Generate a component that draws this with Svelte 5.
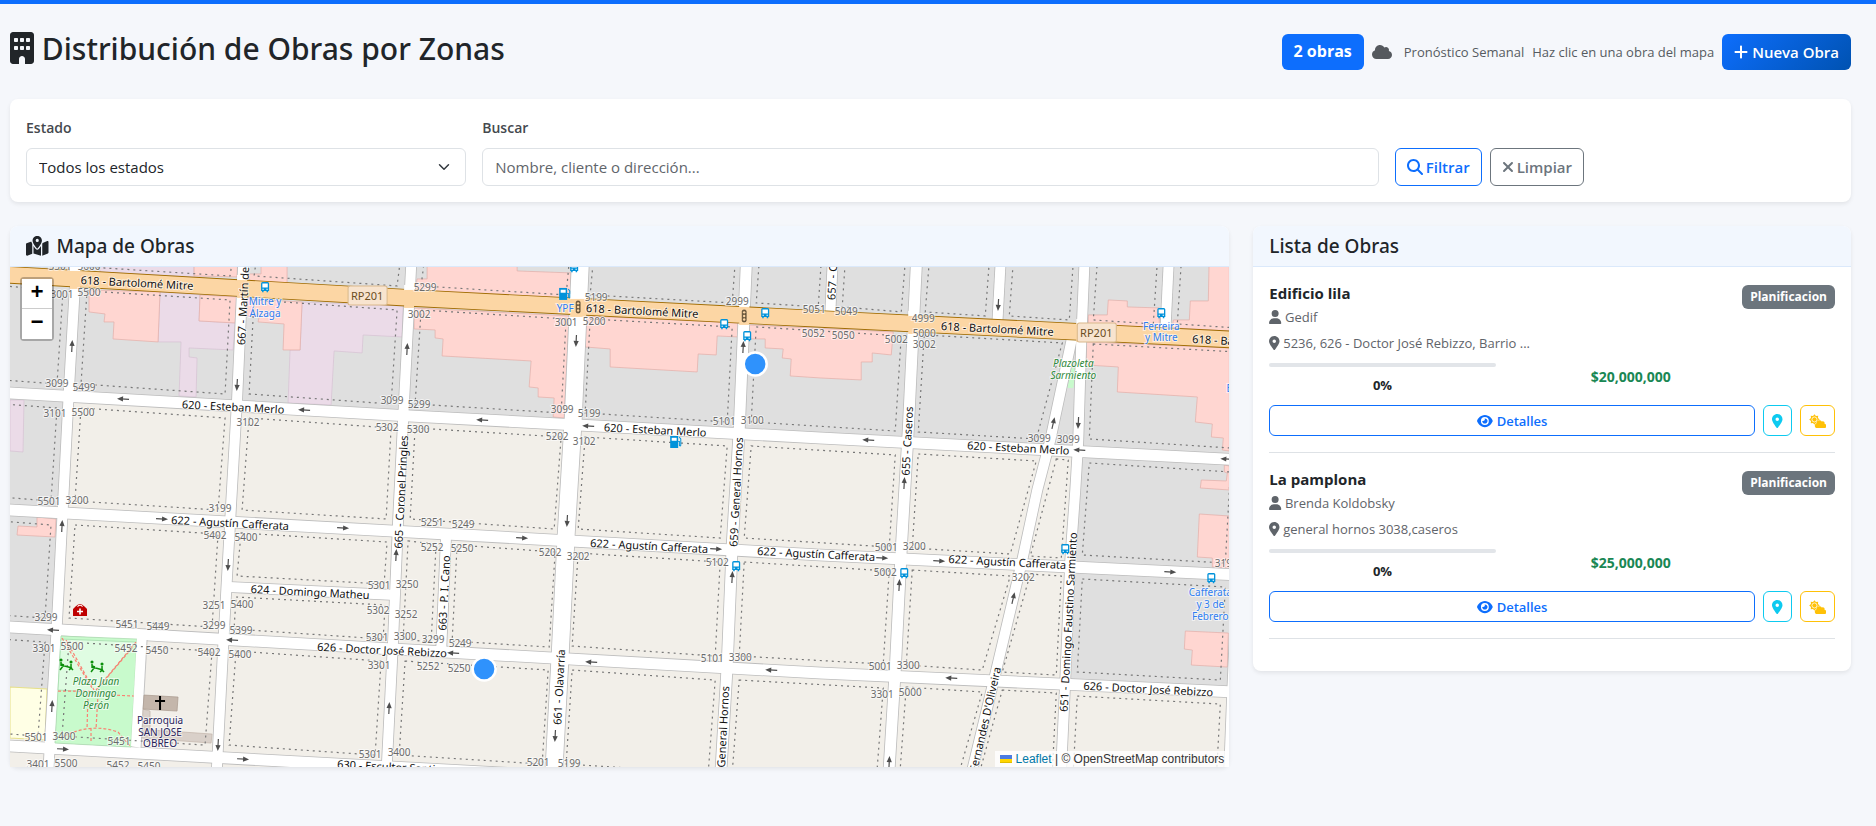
<script>
  const ICONS = {
    building: [384, 'M48 0C21.5 0 0 21.5 0 48V464c0 26.5 21.5 48 48 48h96V432c0-26.5 21.5-48 48-48s48 21.5 48 48v80h96c26.5 0 48-21.5 48-48V48c0-26.5-21.5-48-48-48H48zM64 240c0-8.8 7.2-16 16-16h32c8.8 0 16 7.2 16 16v32c0 8.8-7.2 16-16 16H80c-8.8 0-16-7.2-16-16V240zm112-16h32c8.8 0 16 7.2 16 16v32c0 8.8-7.2 16-16 16H176c-8.8 0-16-7.2-16-16V240c0-8.8 7.2-16 16-16zm80 16c0-8.8 7.2-16 16-16h32c8.8 0 16 7.2 16 16v32c0 8.8-7.2 16-16 16H272c-8.8 0-16-7.2-16-16V240zM80 96h32c8.8 0 16 7.2 16 16v32c0 8.8-7.2 16-16 16H80c-8.8 0-16-7.2-16-16V112c0-8.8 7.2-16 16-16zm80 16c0-8.8 7.2-16 16-16h32c8.8 0 16 7.2 16 16v32c0 8.8-7.2 16-16 16H176c-8.8 0-16-7.2-16-16V112zM272 96h32c8.8 0 16 7.2 16 16v32c0 8.8-7.2 16-16 16H272c-8.8 0-16-7.2-16-16V112c0-8.8 7.2-16 16-16z'],
    cloud: [640, 'M0 336c0 79.5 64.5 144 144 144H512c70.7 0 128-57.3 128-128c0-61.9-44-113.6-102.4-125.4c4.1-10.7 6.4-22.4 6.4-34.6c0-53-43-96-96-96c-19.7 0-38.1 6-53.3 16.2C367 64.2 315.3 32 256 32C167.6 32 96 103.6 96 192c0 2.7 .1 5.4 .2 8.1C40.2 219.8 0 273.2 0 336z'],
    plus: [448, 'M256 80c0-17.7-14.3-32-32-32s-32 14.3-32 32V224H48c-17.7 0-32 14.3-32 32s14.3 32 32 32H192V432c0 17.7 14.3 32 32 32s32-14.3 32-32V288H400c17.7 0 32-14.3 32-32s-14.3-32-32-32H256V80z'],
    search: [512, 'M416 208c0 45.9-14.9 88.3-40 122.7L502.6 457.4c12.5 12.5 12.5 32.8 0 45.3s-32.8 12.5-45.3 0L330.7 376c-34.4 25.2-76.8 40-122.7 40C93.1 416 0 322.9 0 208S93.1 0 208 0S416 93.1 416 208zM208 352a144 144 0 1 0 0-288 144 144 0 1 0 0 288z'],
    times: [384, 'M342.6 150.6c12.5-12.5 12.5-32.8 0-45.3s-32.8-12.5-45.3 0L192 210.7 86.6 105.4c-12.5-12.5-32.8-12.5-45.3 0s-12.5 32.8 0 45.3L146.7 256 41.4 361.4c-12.5 12.5-12.5 32.8 0 45.3s32.8 12.5 45.3 0L192 301.3 297.4 406.6c12.5 12.5 32.8 12.5 45.3 0s12.5-32.8 0-45.3L237.3 256 342.6 150.6z'],
    user: [448, 'M224 256A128 128 0 1 0 224 0a128 128 0 1 0 0 256zm-45.7 48C79.8 304 0 383.8 0 482.3C0 498.7 13.3 512 29.7 512H418.3c16.4 0 29.7-13.3 29.7-29.7C448 383.8 368.2 304 269.7 304H178.3z'],
    pin: [384, 'M215.7 499.2C267 435 384 279.4 384 192C384 86 298 0 192 0S0 86 0 192c0 87.4 117 243 168.3 307.2c12.3 15.3 35.1 15.3 47.4 0zM192 128a64 64 0 1 1 0 128 64 64 0 1 1 0-128z'],
    eye: [576, 'M288 32c-80.8 0-145.5 36.8-192.6 80.6C48.6 156 17.3 208 2.5 243.7c-3.3 7.9-3.3 16.7 0 24.6C17.3 304 48.6 356 95.4 399.4C142.5 443.2 207.2 480 288 480s145.5-36.8 192.6-80.6c46.8-43.5 78.1-95.4 93-131.1c3.3-7.9 3.3-16.7 0-24.6c-14.9-35.7-46.2-87.7-93-131.1C433.5 68.8 368.8 32 288 32zM144 256a144 144 0 1 1 288 0 144 144 0 1 1 -288 0zm144-64c0 35.3-28.7 64-64 64c-7.1 0-13.9-1.2-20.3-3.3c-5.5-1.8-11.9 1.6-11.7 7.4c.3 6.9 1.3 13.8 3.2 20.7c13.7 51.2 66.4 81.6 117.6 67.9s81.6-66.4 67.9-117.6c-11.1-41.5-47.8-69.4-88.6-71.1c-5.8-.2-9.2 6.1-7.4 11.7c2.1 6.4 3.3 13.2 3.3 20.3z'],
    map: [576, 'M408 120c0 54.6-73.1 151.9-105.2 192c-7.7 9.6-22 9.6-29.6 0C241.1 271.9 168 174.6 168 120C168 53.7 221.7 0 288 0s120 53.7 120 120zm8 80.4c3.5-6.9 6.7-13.8 9.6-20.6c.5-1.2 1-2.5 1.5-3.7l116-46.4C558.9 123.4 576 135 576 152V422.8c0 9.8-6 18.6-15.1 22.3L416 503V200.4zM137.6 138.3c2.4 14.1 7.2 28.3 12.8 41.5c2.9 6.8 6.1 13.7 9.6 20.6V451.8L32.9 502.7C17.1 509 0 497.4 0 480.4V209.6c0-9.8 6-18.6 15.1-22.3l122.6-49zM327.8 332c13.9-17.4 35.7-45.7 56.2-77V504.3L192 449.4V255c20.5 31.3 42.3 59.6 56.2 77c20.5 25.6 59.1 25.6 79.6 0zM288 152a40 40 0 1 0 0-80 40 40 0 1 0 0 80z']
  };

  let estado = $state('');
  let buscar = $state('');

  const obras = [
    { nombre: 'Edificio lila', cliente: 'Gedif', direccion: '5236, 626 - Doctor José Rebizzo, Barrio ...', estado: 'Planificacion', avance: 0, monto: '$20,000,000' },
    { nombre: 'La pamplona', cliente: 'Brenda Koldobsky', direccion: 'general hornos 3038,caseros', estado: 'Planificacion', avance: 0, monto: '$25,000,000' }
  ];

  // Street centre lines, in map units
  const mitre = [[-40, 272], [10, 275], [410, 298], [820, 319], [1280, 342]];
  const H = [
    [[-40, 250], [1280, 250]],
    mitre,
    [[-40, 390], [10, 393], [410, 416], [820, 438], [1280, 462]],
    [[-40, 507], [10, 510], [410, 532], [820, 555], [1280, 577]],
    [[-40, 625], [10, 627], [410, 650], [820, 673], [1280, 694]],
    [[-40, 743], [10, 746], [410, 768], [820, 790], [1280, 812]]
  ];
  const V = [
    [[-20, 250], [-30, 812]],
    [[77, 250], [76, 267], [69, 388], [63, 504], [57, 622], [50, 740], [46, 820]],
    [[244, 250], [243, 267], [237, 400], [231, 505], [224, 630], [217, 765], [214, 820]],
    [[412, 250], [411, 267], [404, 400], [398, 520], [393, 640], [387, 760], [384, 820]],
    [[581, 250], [580, 267], [573, 420], [566, 535], [560, 655], [554, 767], [551, 820]],
    [[747, 250], [746, 267], [739, 430], [732, 545], [727, 665], [721, 767], [718, 820]],
    [[917, 250], [916, 267], [908, 430], [901, 550], [895, 670], [889, 767], [886, 820]],
    [[1085, 250], [1084, 267], [1081, 340], [1078, 440], [1075, 490], [1070, 560], [1065, 680], [1061, 767], [1059, 820]],
    [[1252, 250], [1232, 690], [1229, 767], [1227, 820]]
  ];
  const oliveira = [[1073, 332], [1050, 440], [1037, 490], [1022, 560], [996, 670], [972, 770]];
  const minor = [
    [[229, 587], [395, 595]],
    [[446, 534], [441, 652]],
    [[833, 250], [830, 315]],
    [[1001, 250], [997, 325]],
    [[1169, 250], [1165, 333]]
  ];
  const streets = [
    ...[2, 3, 4, 5].map((i) => ({ p: H[i], w: 11 })),
    ...[1, 2, 3].map((i) => ({ p: V[i], w: 10 })),
    { p: V[4], w: 17 }, { p: V[5], w: 11 }, { p: V[6], w: 11 }, { p: V[7], w: 10 }, { p: V[8], w: 10 },
    { p: oliveira, w: 10 },
    ...minor.map((p) => ({ p, w: 10 }))
  ];
  const pts = (p) => p.map((a) => a.join(',')).join(' ');

  const at = (line, v, k) => {
    for (let i = 0; i < line.length - 1; i++) {
      const a = line[i], b = line[i + 1];
      if (v <= b[k] || i === line.length - 2) {
        const t = (v - a[k]) / (b[k] - a[k]);
        return a[1 - k] + t * (b[1 - k] - a[1 - k]);
      }
    }
  };
  const cross = (h, v, dx, dy) => {
    let x = v[0][0], y = 0;
    for (let i = 0; i < 4; i++) {
      y = at(h, x, 0);
      x = at(v, y, 1);
    }
    return [Math.round(x + dx), Math.round(y + dy)];
  };
  const quad = (top, bottom, left, right, g = 12) =>
    pts([cross(top, left, g, g), cross(top, right, -g, g), cross(bottom, right, -g, -g), cross(bottom, left, g, -g)]);

  const plain = [];
  for (let r = 0; r < 5; r++) {
    for (let c = 0; c < 8; c++) {
      if (r === 0 && c >= 5) continue;
      if (c === 6 && r >= 1) continue;
      if ((c === 2 || c === 3) && r === 3) continue;
      plain.push(quad(H[r], H[r + 1], V[c], V[c + 1]));
    }
  }
  const blocks = [
    ...plain,
    quad(H[0], H[1], V[5], minor[2]), quad(H[0], H[1], minor[2], V[6]),
    quad(H[0], H[1], V[6], minor[3]), quad(H[0], H[1], minor[3], V[7]),
    quad(H[0], H[1], V[7], minor[4]), quad(H[0], H[1], minor[4], V[8]),
    ...[1, 2, 3, 4].map((r) => quad(H[r], H[r + 1], V[6], oliveira, 11)),
    ...[2, 3, 4].map((r) => quad(H[r], H[r + 1], oliveira, V[7], 9)),
    quad(H[3], minor[0], V[2], V[3], 11), quad(minor[0], H[4], V[2], V[3], 10),
    quad(H[3], H[4], V[3], minor[1], 10), quad(H[3], H[4], minor[1], V[4], 11)
  ];

  const gray = [
    '10,267 1229,267 1229,460 820,438 410,416 10,393',
    '10,393 69,396 52,690 10,687',
    '1078,452 1229,460 1229,692 1065,684'
  ];
  const pink = [
    '89,290 160,292 158,342 113,339 114,322 104,322 105,314 89,312',
    '200,295 237,297 235,323 199,321',
    '194,250 238,250 237,277 194,276',
    '247,299 302,302 300,350 283,350 284,324 258,322 259,317 247,316',
    '261,250 287,250 287,283 249,281 249,274 261,274',
    '427,250 517,250 517,271 571,273 570,300 415,292 417,279 427,279',
    '414,308 569,316 564,418 553,417 554,398 538,397 538,388 529,387 531,361 442,356 443,339 435,338 435,330 414,329',
    '586,316 738,323 738,337 717,336 716,355 698,354 697,372 610,367 610,349 585,347',
    '749,325 893,332 891,355 872,353 872,362 861,362 861,380 820,378 790,376 791,359 782,358 783,349 765,348 765,339 749,339',
    '1088,315 1107,315 1108,300 1127,301 1127,307 1159,308 1159,328 1088,325',
    '1173,320 1189,320 1190,301 1208,301 1209,250 1229,250 1229,331 1172,328',
    '1086,342 1229,348 1229,451 1222,450 1223,438 1211,437 1212,424 1195,422 1197,397 1117,392 1118,367 1086,365',
    '1224,465 1229,466 1229,490 1200,488 1201,480 1226,481 1227,473 1224,472',
    '1199,514 1229,516 1229,568 1212,567 1212,558 1197,557',
    '1185,631 1228,633 1227,667 1191,665 1192,650 1184,649',
    '37,517 56,519 55,537 17,535 18,526 37,527'
  ];
  const lilac = [
    '160,292 200,295 199,321 235,323 233,350 189,348 189,357 197,358 196,397 179,396 181,342 158,342',
    '100,250 194,250 194,277 100,272',
    '302,302 403,306 402,337 363,335 362,353 334,351 331,405 288,403 290,350 300,350',
    '10,400 24,400 23,452 10,451'
  ];

  const numbers = [
    [60, 266, '5501'], [89, 266, '5600'], [62, 294, '3001'], [89, 292, '5500'], [57, 383, '3099'], [84, 387, '5499'], [55, 413, '3101'], [83, 412, '5500'],
    [392, 400, '3099'], [248, 422, '3102'], [387, 427, '5302'], [425, 287, '5299'], [419, 314, '3002'], [419, 404, '5299'], [418, 429, '5300'],
    [566, 322, '3001'], [596, 297, '5199'], [594, 321, '5200'], [562, 409, '3099'], [589, 413, '5199'], [557, 436, '5202'], [584, 441, '3102'],
    [737, 301, '2999'], [724, 421, '5101'], [752, 420, '3100'], [814, 309, '5051'], [813, 333, '5052'], [846, 311, '5049'], [843, 335, '5050'],
    [896, 339, '5002'], [923, 318, '4999'], [924, 333, '5000'], [924, 344, '3002'], [1039, 438, '3099'], [1068, 439, '3099'],
    [49, 501, '5501'], [77, 500, '3200'], [220, 508, '3199'], [215, 535, '5402'], [246, 537, '5400'], [379, 585, '5301'], [242, 604, '5400'],
    [378, 610, '5302'], [407, 584, '3250'], [406, 614, '3252'], [214, 605, '3251'], [46, 617, '3299'], [127, 624, '5451'], [158, 626, '5449'],
    [214, 625, '3299'], [241, 630, '5399'], [377, 637, '5301'], [405, 636, '3300'], [44, 648, '3301'], [72, 646, '5500'], [126, 648, '5452'],
    [157, 650, '5450'], [209, 652, '5402'], [240, 654, '5400'], [379, 665, '3301'], [36, 737, '5501'], [64, 736, '3400'], [119, 741, '5451'],
    [370, 754, '5301'], [399, 752, '3400'], [38, 764, '3401'], [66, 763, '5500'], [118, 765, '5452'], [149, 766, '5450'],
    [432, 522, '5251'], [463, 524, '5249'], [432, 547, '5252'], [462, 548, '5250'], [550, 552, '5202'], [578, 556, '3202'], [717, 562, '5102'],
    [433, 639, '3299'], [460, 643, '5249'], [428, 666, '5252'], [459, 668, '5250'], [712, 658, '5101'], [740, 657, '3300'], [538, 762, '5201'],
    [569, 763, '5199'], [886, 547, '5001'], [914, 546, '3200'], [885, 572, '5002'], [1023, 577, '3202'], [880, 666, '5001'], [908, 665, '3300'],
    [882, 694, '3301'], [910, 692, '5000'], [1226, 563, '3199']
  ];

  const names = [
    [137, 283, 3, '618 - Bartolomé Mitre'], [642, 311, 3, '618 - Bartolomé Mitre'], [997, 329, 3, '618 - Bartolomé Mitre'],
    [1192, 339, 3, '618 - Bartolomé Mitre', 'start'],
    [233, 407, 3, '620 - Esteban Merlo'], [655, 430, 3, '620 - Esteban Merlo'], [1018, 448, 3, '620 - Esteban Merlo'],
    [230, 523, 3, '622 - Agustín Cafferata'], [649, 546, 3, '622 - Agustín Cafferata'], [816, 554, 3, '622 - Agustín Cafferata'], [1007, 562, 3, '622 - Agustín Cafferata'],
    [310, 592, 3, '624 - Domingo Matheu'], [382, 650, 3, '626 - Doctor José Rebizzo'], [1148, 689, 3, '626 - Doctor José Rebizzo'],
    [337, 764, 3, '630 - Escultor Santiago', 'start'],
    [241, 345, -87, '667 - Martín de Álzaga', 'start'], [401, 492, -87, '665 - Coronel Pringles'], [444, 593, -87, '663 - P. I. Cano'],
    [559, 687, -87, '661 - Olavarría'], [736, 492, -87, '659 - General Hornos'], [725, 686, -87, '659 - General Hornos', 'end'],
    [831, 300, -87, '657 - Carlos Tejedor', 'start'], [907, 441, -87, '655 - Caseros'], [1068, 622, -87, '651 - Domingo Faustino Sarmiento'],
    [997, 667, -77, "Fernandes D'Oliveira", 'end']
  ];

  const places = [
    [265, 301, 'stop', 'Mitre y'], [265, 313, 'stop', 'Álzaga'], [565, 308, 'stop', 'YPF'], [1161, 326, 'stop', 'Ferreira'], [1161, 337, 'stop', 'y Mitre'],
    [1210, 592, 'stop', 'Cafferata'], [1210, 604, 'stop', 'y 3 de'], [1210, 616, 'stop', 'Febrero'], [1229, 388, 'stop', 'E'],
    [1073, 363, 'park', 'Plazoleta'], [1073, 375, 'park', 'Sarmiento'], [96, 681, 'park', 'Plaza Juan'], [96, 693, 'park', 'Domingo'], [96, 705, 'park', 'Perón'],
    [160, 720, 'church', 'Parroquia'], [160, 732, 'church', 'SAN JOSE'], [160, 743, 'church', 'OBREO']
  ];

  // x, y, heading in degrees (0 points east)
  const arrows = [
    [72, 346, -87], [237, 385, 93], [123, 399, 183], [304, 410, 183], [407, 349, -87], [576, 341, 93], [743, 347, -87], [482, 420, 183], [588, 426, 183],
    [998, 305, 93], [1053, 423, -77], [1078, 423, 93], [868, 440, 183], [1079, 450, 183], [1226, 459, 183], [904, 483, -87], [162, 519, 3], [343, 528, 3],
    [62, 526, -87], [228, 565, 93], [396, 555, -87], [53, 630, 183], [232, 640, 183], [52, 706, -87], [389, 708, -87], [218, 745, 93], [63, 749, 3],
    [243, 759, 3], [567, 521, 93], [522, 538, 3], [716, 549, 3], [732, 577, -87], [453, 653, 183], [591, 662, 183], [771, 670, 183], [555, 736, 93],
    [882, 558, 3], [939, 561, 3], [1170, 572, 3], [899, 585, -87], [1013, 598, -77], [951, 678, 183], [889, 762, -87]
  ];
  const buses = [[265, 287], [574, 267], [724, 324], [765, 313], [747, 336], [1161, 313], [736, 566], [904, 573], [1065, 549], [1211, 578]];
  const pumps = [[565, 294], [676, 442]];
  const lights = [[578, 307], [744, 316]];
  const shields = [[367, 296], [1096, 333]];
  const markers = [[755, 364], [484, 669]];

  const sun = Array.from({ length: 16 }, (_, i) => {
    const r = i % 2 ? 138 : 192;
    const a = (i * Math.PI) / 8;
    return `${Math.round(200 + r * Math.cos(a))},${Math.round(200 + r * Math.sin(a))}`;
  }).join(' ');
</script>

{#snippet icon(name, cls = '')}
  <svg class="icon {cls}" viewBox="0 0 {ICONS[name][0]} 512" style:aspect-ratio="{ICONS[name][0]} / 512" aria-hidden="true">
    <path d={ICONS[name][1]} fill-rule={name === 'search' ? 'evenodd' : 'nonzero'} />
  </svg>
{/snippet}

{#snippet cloudSun()}
  <svg class="icon" viewBox="0 0 640 512" style:aspect-ratio="640 / 512" aria-hidden="true">
    <polygon points={sun} />
    <circle cx="200" cy="200" r="92" fill="none" stroke="#fff" stroke-width="28" />
    <path d={ICONS.cloud[1]} transform="translate(212 206) scale(0.66)" stroke="#fff" stroke-width="44" paint-order="stroke" />
  </svg>
{/snippet}

<main class="page">
  <header class="top">
    <h1>{@render icon('building')} Distribución de Obras por Zonas</h1>
    <div class="actions">
      <span class="count">2 obras</span>
      {@render icon('cloud', 'cloud')}
      <span class="hint">Pronóstico Semanal</span>
      <span class="hint">Haz clic en una obra del mapa</span>
      <a class="btn new" href="#nueva">{@render icon('plus')} Nueva Obra</a>
    </div>
  </header>

  <form class="card filters" onsubmit={(e) => e.preventDefault()}>
    <div class="field state">
      <label for="estado">Estado</label>
      <select id="estado" bind:value={estado}>
        <option value="">Todos los estados</option>
        <option value="planificacion">Planificacion</option>
      </select>
    </div>
    <div class="field query">
      <label for="buscar">Buscar</label>
      <input id="buscar" type="text" placeholder="Nombre, cliente o dirección..." bind:value={buscar} />
    </div>
    <div class="field-actions">
      <button class="btn primary" type="submit">{@render icon('search')} Filtrar</button>
      <button class="btn secondary" type="reset">{@render icon('times')} Limpiar</button>
    </div>
  </form>

  <div class="columns">
    <section class="card map-card">
      <h2>{@render icon('map')} Mapa de Obras</h2>
      <div class="map">
        <svg class="tiles" viewBox="10 267 1219 500" preserveAspectRatio="xMidYMid slice" role="img" aria-label="Mapa de Obras">
          <rect x="0" y="240" width="1260" height="540" fill="#f2efe9" />
          {#each gray as p}<polygon points={p} fill="#dfdfdf" />{/each}
          <polygon points="10,687 47,689 45,740 10,738" fill="#ffffe5" stroke="#e6e08a" />
          {#each lilac as p}<polygon points={p} fill="#ebdbe8" stroke="#d6c2d2" stroke-width="0.7" />{/each}
          {#each pink as p}<polygon points={p} fill="#ffd6d1" stroke="#e2aea8" stroke-width="0.7" />{/each}
          <polygon points="1071,368 1076,368 1073,388 1067,388" fill="#c8facc" />

          {#each streets as s}<polyline class="line" points={pts(s.p)} stroke="#bcbcbc" stroke-width={s.w + 1.6} />{/each}
          {#each streets as s}<polyline class="line" points={pts(s.p)} stroke="#fff" stroke-width={s.w} />{/each}
          <polyline class="line" points={pts(mitre)} stroke="#a06b00" stroke-width="17.5" />
          <polyline class="line" points={pts(mitre)} stroke="#fcd6a4" stroke-width="15.8" />
          {#each [1, 2, 3, 4, 5, 6, 7] as i}
            {@const c = cross(mitre, V[i], 0, 0)}
            {@const w = i === 4 ? 16 : 10}
            <line x1={c[0]} y1={c[1] - 13} x2={c[0]} y2={c[1] - 7} stroke="#fff" stroke-width={w} />
            <line x1={c[0]} y1={c[1] - 8} x2={c[0]} y2={c[1] + 10} stroke="#fcd6a4" stroke-width={w} />
          {/each}

          <polygon points="61,636 137,639 131,747 55,743" fill="#c8facc" stroke="#a9d9ae" stroke-width="0.7" />
          <polygon points="61,639 136,642 95,692 58,690" fill="#dffce2" stroke="#9fd8a8" stroke-width="0.7" />
          <g class="paths">
            <path d="M62 638L92 688M66 640L94 690M136 642L96 690M132 648L98 688M58 691L90 691M112 695L134 696M88 694L87 729M98 694L96 729M91 728V743M60 738Q90 722 118 732L130 746" />
          </g>
          <polygon points="137,636 147,640 141,748 131,746" fill="#fff" />
          <polyline class="line" points="147,640 141,748" stroke="#c4c4c4" stroke-width="1" />
          <polygon points="143,709 150,711 150,730 183,732 212,734 211,743 142,738" fill="#d9d0c9" stroke="#c3b5ab" stroke-width="0.7" />
          <polygon points="144,695 178,697 177,711 143,709" fill="#c4b6ab" stroke="#a99a8e" stroke-width="0.7" />

          {#each blocks as b}<polygon class="dots" points={b} />{/each}

          {#each shields as [x, y]}
            <rect x={x - 19} y={y - 10} width="39" height="19" rx="2" fill="#f8e4cf" stroke="#d9b88c" />
            <text class="ref" {x} y={y + 4}>RP201</text>
          {/each}
          {#each numbers as [x, y, t]}<text class="num" {x} y={y + 4}>{t}</text>{/each}
          {#each names as [x, y, a, t, anchor]}
            <text class="name {anchor ?? 'middle'}" transform="translate({x} {y}) rotate({a})" y="4">{t}</text>
          {/each}
          {#each places as [x, y, c, t]}<text class="place {c}" {x} y={y + 4}>{t}</text>{/each}

          {#each arrows as [x, y, a]}
            <g transform="translate({x} {y}) rotate({a})">
              <path d="M-6 0H2" stroke="#4d4d4d" stroke-width="1.2" />
              <path d="M6 0L0 -2.6V2.6z" fill="#4d4d4d" />
            </g>
          {/each}
          {#each buses as [x, y]}
            <g transform="translate({x - 4} {y - 5})">
              <path d="M1.5 0h5A1.5 1.5 0 0 1 8 1.500V9H7v1.200H5.500V9h-3v1.200H1V9H0V1.500A1.500 1.500 0 0 1 1.500 0z" fill="#0092da" />
              <path d="M1.300 1.500h5.400v4H1.300zM1.300 6.800h1.400v1H1.300zM5.300 6.800h1.400v1H5.300z" fill="#fff" />
            </g>
          {/each}
          {#each pumps as [x, y]}
            <g transform="translate({x - 6} {y - 6})">
              <path d="M0 0h8v12H0z" fill="#0092da" />
              <path d="M1.500 1.800h5v3h-5z" fill="#fff" />
              <path d="M8 5.500h1.200V9.500q1.400 1 1.400-.5V3L9 1" fill="none" stroke="#0092da" />
            </g>
          {/each}
          {#each lights as [x, y]}
            <g transform="translate({x} {y})">
              <rect x="-2" y="-6" width="4" height="12" rx="1.500" fill="#6d5a3e" stroke="#4a3c28" stroke-width="0.6" />
              <circle cy="-3.600" r="1.200" fill="#fcd6a4" /><circle r="1.200" fill="#fcd6a4" /><circle cy="3.600" r="1.200" fill="#fcd6a4" />
            </g>
          {/each}
          <g transform="translate(80 610)">
            <path d="M-7 6V-1L-4.500 -3.500Q0 -8.500 4.500 -3.500L7 -1V6z" fill="#bf0000" />
            <path d="M-2.500 -3.500Q0 -6 2.500 -3.500" fill="none" stroke="#fff" />
            <path d="M-3 1.500H3M0 -1.500V4.500" stroke="#fff" stroke-width="1.600" />
          </g>
          {#each [[66, 664], [97, 666]] as [x, y]}
            <g transform="translate({x} {y})" stroke="#0a8f0a" stroke-width="1.500" fill="none">
              <path d="M-5 -2V2M-6 6L-3 2M5 0V4M3 6l2-2 2 2M-5 1L6 4M-5 0l3 1" />
              <circle cx="-5" cy="-4" r="0.800" /><circle cx="5" cy="-2" r="0.800" />
            </g>
          {/each}
          <path d="M160 696v14M155 701h10" stroke="#000" stroke-width="2" />

          {#each markers as [x, y]}
            <circle cx={x} cy={y} r="11.500" fill="#2f92fc" stroke="#fff" stroke-width="2.500" />
          {/each}
        </svg>
        <div class="zoom">
          <button type="button" aria-label="Acercar">+</button>
          <button type="button" aria-label="Alejar">−</button>
        </div>
        <div class="attribution">
          <a href="#leaflet"><svg viewBox="0 0 12 8" aria-hidden="true"><path fill="#4c7be1" d="M0 0h12v4H0z" /><path fill="#ffd500" d="M0 4h12v3H0z" /><path fill="#e0bc00" d="M0 7h12v1H0z" /></svg> Leaflet</a> | © OpenStreetMap contributors
        </div>
      </div>
    </section>

    <section class="card list-card">
      <h2>Lista de Obras</h2>
      <ul>
        {#each obras as obra}
          <li>
            <div class="head">
              <div>
                <h3>{obra.nombre}</h3>
                <p class="client">{@render icon('user')} {obra.cliente}</p>
              </div>
              <span class="badge">{obra.estado}</span>
            </div>
            <p class="address">{@render icon('pin')} {obra.direccion}</p>
            <div class="figures">
              <div>
                <div class="track"><div class="bar" style:width="{obra.avance}%"></div></div>
                <strong>{obra.avance}%</strong>
              </div>
              <strong class="money">{obra.monto}</strong>
            </div>
            <div class="row-actions">
              <a class="btn small primary details" href="#detalles">{@render icon('eye')} Detalles</a>
              <button class="btn small info" type="button" aria-label="Ver en el mapa">{@render icon('pin')}</button>
              <button class="btn small warning" type="button" aria-label="Pronóstico">{@render cloudSun()}</button>
            </div>
          </li>
        {/each}
      </ul>
    </section>
  </div>
</main>

<style>
  :global(body) {
    background: #f5f7fb;
    color: #212529;
    font-family: 'Open Sans', 'Noto Sans', sans-serif;
    font-size: 15px;
    line-height: 24px;
  }
  .page {
    box-sizing: border-box;
    border-top: 4px solid #0d6efd;
    padding: 24px 25px 24px 10px;
  }
  .page :global(*) { box-sizing: border-box; }
  h1, h2, h3, p, ul { margin: 0; padding: 0; }
  h1, h2 { font-family: 'Noto Sans', sans-serif; font-weight: 500; }
  .icon { height: 1em; vertical-align: -0.125em; fill: currentColor; }

  .top { display: flex; justify-content: space-between; margin-bottom: 23px; }
  h1 { font-size: 30px; line-height: 42px; }
  h1 .icon { height: 32px; margin-top: -4px; vertical-align: -4px; }
  .actions { display: flex; align-items: center; gap: 8px; height: 48px; }
  .count {
    height: 36px; padding: 0 12px; border-radius: 6px;
    background: #0d6efd; color: #fff; font-size: 16px; font-weight: 700; line-height: 34px;
  }
  .actions > .cloud { height: 16px; color: #55595e; margin-right: 4px; }
  .hint { font-size: 13px; color: #565b61; }

  .btn {
    display: inline-flex; align-items: center; justify-content: center; gap: 4px;
    height: 38px; padding: 0 12px; border: 1px solid currentColor; border-radius: 6px;
    background: #fff; font: inherit; font-weight: 600; text-decoration: none; white-space: nowrap;
  }
  .btn .icon { height: 16px; }
  .new { height: 36px; border: 0; color: #fff; background: linear-gradient(135deg, #0d6efd, #0052b1); }
  .primary { color: #0d6efd; border-color: #0d6efd; }
  .secondary { color: #6c757d; border-color: #6c757d; }
  .info { color: #0dcaf0; }
  .warning { color: #ffc107; }

  .card { background: #fff; border-radius: 8px; box-shadow: 0 2px 4px rgba(0, 0, 0, 0.08); }
  .filters { display: grid; grid-template-columns: repeat(12, minmax(0, 1fr)); column-gap: 16px; padding: 17px 16px 16px; margin-bottom: 24px; align-items: end; }
  .state { grid-column: span 3; }
  .query { grid-column: span 6; }
  .field label { display: block; margin-bottom: 8px; color: #45494e; font-size: 14px; font-weight: 600; }
  select, input {
    display: block; width: 100%; height: 38px; padding: 0 12px; border: 1px solid #dee2e6; border-radius: 6px;
    background-color: #fff; color: #212529; font: inherit; appearance: none;
  }
  select {
    background-image: url("data:image/svg+xml,%3csvg xmlns='http://www.w3.org/2000/svg' viewBox='0 0 16 16'%3e%3cpath fill='none' stroke='%23343a40' stroke-linecap='round' stroke-linejoin='round' stroke-width='2' d='m2 5 6 6 6-6'/%3e%3c/svg%3e");
    background-repeat: no-repeat; background-position: right 14px center; background-size: 14px 12px;
  }
  input::placeholder { color: #5f656b; opacity: 1; }
  .field-actions { grid-column: span 3; display: flex; gap: 8px; }
  .field-actions .btn { gap: 3px; padding: 0 11px; }

  .columns { display: grid; grid-template-columns: repeat(12, minmax(0, 1fr)); column-gap: 24px; align-items: start; }
  .map-card { grid-column: span 8; }
  .list-card { grid-column: span 4; }
  h2 {
    height: 41px; padding: 0 16px; border-bottom: 1px solid #dbe9fb; border-radius: 8px 8px 0 0;
    background: #f2f7fe; font-size: 19px; line-height: 40px;
  }
  h2 .icon { height: 20px; margin-right: 3px; vertical-align: -3px; }

  .map { position: relative; height: 500px; overflow: hidden; }
  .tiles { display: block; width: 100%; height: 100%; }
  .tiles text { font-family: 'Noto Sans', sans-serif; font-size: 10px; text-anchor: middle; paint-order: stroke; stroke: rgba(255, 255, 255, 0.6); stroke-width: 2px; }
  .line { fill: none; }
  .dots { fill: none; stroke: #777; stroke-width: 1.200px; stroke-dasharray: 2 4; }
  .paths path { fill: none; stroke: #fa8072; stroke-dasharray: 3 2; stroke-width: 1.200px; }
  .tiles .num { fill: #6b6b6b; }
  .tiles .name { fill: #111; font-size: 11px; }
  .tiles .start { text-anchor: start; }
  .tiles .end { text-anchor: end; }
  .tiles .ref { fill: #6b4d1e; stroke: none; font-size: 11px; }
  .tiles .stop { fill: #2f7df0; }
  .tiles .park { fill: #2f8a3c; font-style: italic; }
  .tiles .church { fill: #29245c; }
  .zoom {
    position: absolute; top: 10px; left: 10px; display: flex; flex-direction: column;
    border: 2px solid rgba(0, 0, 0, 0.25); border-radius: 4px; background-clip: padding-box;
  }
  .zoom button {
    width: 30px; height: 30px; padding: 0; border: 0; background: #fff; color: #000;
    font: bold 22px/30px 'Liberation Mono', monospace;
  }
  .zoom button:first-child { border-bottom: 1px solid #ccc; }
  .attribution {
    position: absolute; right: 0; bottom: 0; padding: 0 5px; background: rgba(255, 255, 255, 0.8);
    color: #333; font: 12px/16px 'Liberation Sans', sans-serif;
  }
  .attribution a { color: #0078a8; text-decoration: none; }
  .attribution svg { width: 12px; height: 8px; }

  ul { padding: 0 16px 32px; list-style: none; }
  li { padding: 14px 0 16px; border-bottom: 1px solid #dee2e6; }
  .head { display: flex; justify-content: space-between; align-items: flex-start; }
  h3 { font-size: 15px; font-weight: 700; line-height: 24px; }
  .client, .address { color: #5f646a; font-size: 13px; line-height: 24px; }
  .client .icon, .address .icon { height: 14px; }
  .address { margin-top: 2px; }
  .badge { margin-top: 4px; padding: 0 8px; border-radius: 6px; background: #6c757d; color: #fff; font-size: 12px; font-weight: 700; line-height: 24px; }
  .figures { display: grid; grid-template-columns: 40% 40%; column-gap: 22px; align-items: center; margin-top: 8px; text-align: center; font-size: 13px; line-height: 20px; }
  .track { height: 4px; margin-bottom: 8px; border-radius: 2px; background: #e2e5e9; overflow: hidden; }
  .bar { height: 100%; background: #0d6efd; }
  .money { padding-bottom: 4px; color: #198754; font-size: 14px; }
  .figures strong { display: block; }
  .row-actions { display: flex; gap: 8px; margin-top: 10px; }
  .small { height: 31px; padding: 0 8px; font-size: 13px; }
  .small .icon { height: 14px; }
  .details { flex: 1; }
</style>
